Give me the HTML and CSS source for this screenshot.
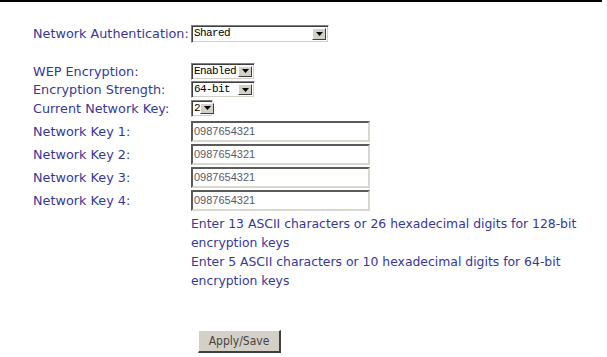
FILE: index.html
```html
<!DOCTYPE html>
<html>
<head>
<meta charset="utf-8">
<link rel="stylesheet" href="styles.css">
</head>
<body>
<div class="topline"></div>
<div class="page">
  <div class="row auth">
    <span class="label col">Network Authentication:</span>
    <span class="sel w138"><span class="val">Shared</span><span class="arr"><svg width="7" height="4" viewBox="0 0 7 4"><path d="M0 0H7L3.5 4Z" fill="#000"/></svg></span></span>
  </div>
  <div class="group">
    <div class="row small">
      <span class="label col">WEP Encryption:</span>
      <span class="sel w64"><span class="val">Enabled</span><span class="arr"><svg width="7" height="4" viewBox="0 0 7 4"><path d="M0 0H7L3.5 4Z" fill="#000"/></svg></span></span>
    </div>
    <div class="row small">
      <span class="label col">Encryption Strength:</span>
      <span class="sel w64"><span class="val">64-bit</span><span class="arr"><svg width="7" height="4" viewBox="0 0 7 4"><path d="M0 0H7L3.5 4Z" fill="#000"/></svg></span></span>
    </div>
    <div class="row small">
      <span class="label col">Current Network Key:</span>
      <span class="sel w21"><span class="val">2</span><span class="arr"><svg width="7" height="4" viewBox="0 0 7 4"><path d="M0 0H7L3.5 4Z" fill="#000"/></svg></span></span>
    </div>
    <div class="keys">
      <div class="row key">
        <span class="label col">Network Key 1:</span>
        <span class="inp">0987654321</span>
      </div>
      <div class="row key">
        <span class="label col">Network Key 2:</span>
        <span class="inp">0987654321</span>
      </div>
      <div class="row key">
        <span class="label col">Network Key 3:</span>
        <span class="inp">0987654321</span>
      </div>
      <div class="row key">
        <span class="label col">Network Key 4:</span>
        <span class="inp">0987654321</span>
      </div>
    </div>
    <div class="hint">
      <p>Enter 13 ASCII characters or 26 hexadecimal digits for 128-bit encryption keys</p>
      <p>Enter 5 ASCII characters or 10 hexadecimal digits for 64-bit encryption keys</p>
    </div>
  </div>
  <div class="actions">
    <button class="btn">Apply/Save</button>
  </div>
</div>
</body>
</html>
```
FILE: styles.css
```css
html, body {
  margin: 0;
  padding: 0;
  background: #fff;
}
body {
  width: 607px;
  height: 357px;
  overflow: hidden;
  font-family: "DejaVu Sans", sans-serif;
  font-size: 12.8px;
  color: #37379a;
}
.topline {
  width: 602px;
  height: 2px;
  background: #000;
}
.page {
  padding: 22px 0 0 33px;
}
.row {
  display: flex;
  align-items: center;
}
.label {
  white-space: nowrap;
}
.col {
  width: 158px;
  flex: none;
}
.auth {
  height: 19px;
}
.auth .sel {
  height: 18px;
}
.group {
  margin-top: 19px;
}
.small {
  height: 18.5px;
}
.keys {
  margin-top: 2px;
}
.key {
  height: 23px;
}
.sel {
  display: inline-flex;
  align-items: stretch;
  box-sizing: border-box;
  height: 17px;
  border-top: 1px solid #808080;
  border-left: 1px solid #808080;
  border-right: 1px solid #fff;
  border-bottom: 1px solid #fff;
  box-shadow: inset 1px 1px 0 #404040, inset -1px -1px 0 #d4d0c8;
  background: #fff;
  font-family: "Liberation Mono", "DejaVu Sans Mono", monospace;
  font-size: 11px;
  letter-spacing: -0.6px;
  color: #000;
}
.sel .val {
  flex: 1;
  padding-left: 2px;
  line-height: 15px;
  white-space: nowrap;
}
.sel .arr {
  flex: none;
  width: 14px;
  margin: 2px 2px 2px 0;
  box-sizing: border-box;
  background: #d4d0c8;
  border-top: 1px solid #fff;
  border-left: 1px solid #fff;
  border-right: 1px solid #404040;
  border-bottom: 1px solid #404040;
  display: flex;
  align-items: center;
  justify-content: center;
}
.w138 { width: 138px; }
.w64 { width: 64px; }
.w21 { width: 22px; }
.inp {
  box-sizing: border-box;
  width: 179px;
  height: 21px;
  border-top: 2px solid #5a5a5a;
  border-left: 2px solid #5a5a5a;
  border-right: 2px solid #d8d8d0;
  border-bottom: 2px solid #d8d8d0;
  font-family: "Liberation Sans", sans-serif;
  font-size: 11px;
  color: #5a5a6a;
  line-height: 17px;
  padding-left: 1px;
}
.hint {
  margin-left: 158px;
  margin-top: 2px;
  width: 400px;
  font-size: 12.4px;
  line-height: 19px;
}
.hint p {
  margin: 0;
}
.actions {
  margin-top: 40px;
  margin-left: 165px;
}
.btn {
  width: 83px;
  height: 23px;
  background: #d4d0c8;
  border-top: 1px solid #fff;
  border-left: 1px solid #fff;
  border-right: 2px solid #404040;
  border-bottom: 2px solid #404040;
  font-family: "DejaVu Sans Condensed", "DejaVu Sans", sans-serif;
  font-size: 12px;
  color: #444;
  padding: 0;
}
```
